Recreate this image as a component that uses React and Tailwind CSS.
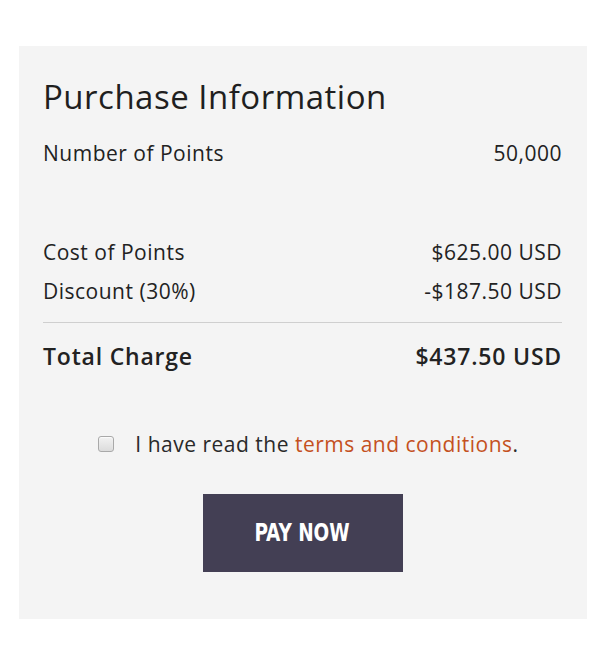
import React from 'react';

const Row = ({ label, value, bold }) => (
  <div
    className={`flex justify-between items-center leading-[28px] ${
      bold ? 'font-semibold text-[23px] tracking-[0.8px]' : 'text-[21px] tracking-[0.5px]'
    }`}
  >
    <span>{label}</span>
    <span>{value}</span>
  </div>
);

export default function App() {
  return (
    <div className="bg-white pt-[46px] pb-[29px] pl-[19px] pr-[22px] font-['Open_Sans',sans-serif] text-[#222]">
      <section className="bg-[#f4f4f4] pl-[24px] pr-[25px] pt-[32px] pb-[47px]">
        <h2 className="text-[33px] leading-[38px] font-normal tracking-[0.5px] text-[#1f1f1f]">
          Purchase Information
        </h2>

        <div className="mt-[23px]">
          <Row label="Number of Points" value="50,000" />
        </div>

        <div className="mt-[71px] flex flex-col gap-[11px]">
          <Row label="Cost of Points" value="$625.00 USD" />
          <Row label="Discount (30%)" value="-$187.50 USD" />
        </div>

        <div className="mt-[17px] h-px bg-[#cfcfcf]" />

        <div className="mt-[19px]">
          <Row label="Total Charge" value="$437.50 USD" bold />
        </div>

        <label className="mt-[60px] flex items-center justify-center pl-[12px] gap-[21px] text-[21px] tracking-[0.5px] leading-[28px] text-[#2a2a2a]">
          <span className="w-[16px] h-[16px] rounded-[3px] border border-[#a9a9a9] bg-gradient-to-b from-[#f2f2f2] to-[#dcdcdc] shadow-[inset_0_1px_1px_rgba(255,255,255,0.8)]" />
          <span>
            I have read the{' '}
            <a href="#" className="text-[#c4511f]">
              terms and conditions
            </a>
            .
          </span>
        </label>

        <div className="mt-[36px] flex justify-center">
          <button className="w-[200px] h-[78px] bg-[#433f54] text-white font-['DejaVu_Sans_Condensed','DejaVu_Sans',sans-serif] font-bold text-[25px]">
            <span className="inline-block scale-x-[0.82]">PAY NOW</span>
          </button>
        </div>
      </section>
    </div>
  );
}
